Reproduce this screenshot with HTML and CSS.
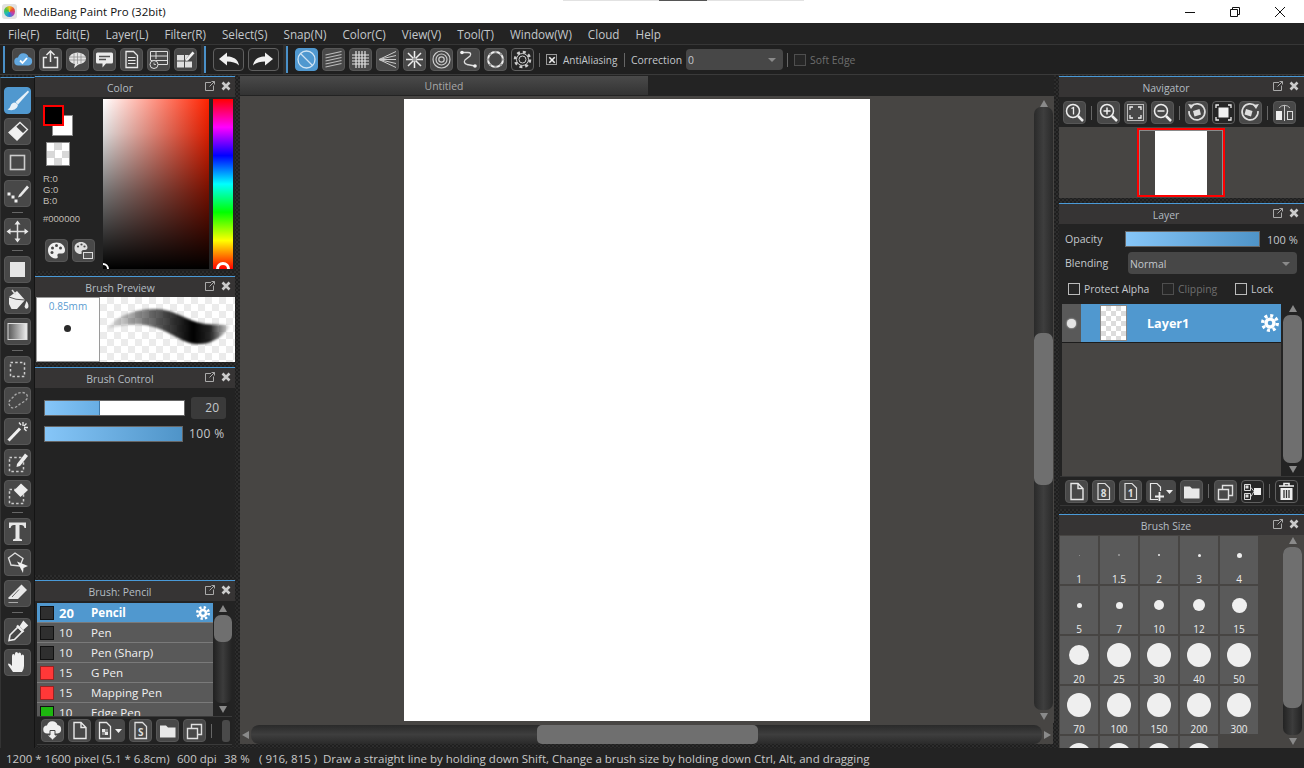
FILE: index.html
```html
<!DOCTYPE html>
<html lang="en">
<head>
    <meta charset="UTF-8">
    <meta name="viewport" content="width=device-width, initial-scale=1.0">
    <title>MediBang Paint Pro</title>
    <link rel="stylesheet" href="styles.css">
</head>
<body>

<svg class="defs" aria-hidden="true">
    <symbol id="i-popout" viewBox="0 0 10 10"><path d="M6 1.500H.5V9.500H8.500V4.500M4.500 5.500L9.500 .5M6.500 .5H9.500V3.500" fill="none" stroke="#aaa"/></symbol>
    <symbol id="i-close" viewBox="0 0 10 10"><path d="M1.500 1.500L8.500 8.500M8.500 1.500L1.500 8.500" fill="none" stroke="#ccc" stroke-width="2.600"/></symbol>
    <symbol id="i-gear" viewBox="0 0 16 16"><circle cx="8" cy="8" r="5" fill="#fff"/><circle cx="8" cy="8" r="6.500" fill="none" stroke="#fff" stroke-width="3" stroke-dasharray="2.600 2.500"/><circle cx="8" cy="8" r="2" fill="#5098cf"/></symbol>
    <symbol id="i-new" viewBox="0 0 23 23"><path d="M6 3.500H13L18 8.500V19.500H6ZM13 3.500V8.500H18" fill="none" stroke="#e8e8e8" stroke-width="1.400"/></symbol>
    <symbol id="i-folder" viewBox="0 0 23 23"><path d="M4 6.500H10L12 8.500H19.500V18.500H4Z" fill="#e8e8e8"/></symbol>
    <symbol id="i-copy" viewBox="0 0 23 23"><path d="M4.500 9.500H14.500V19.500H4.500ZM8.500 9.500V5.500H18.500V15.500H14.500" fill="none" stroke="#e0e0e0" stroke-width="1.400"/></symbol>
</svg>

<div class="app">

    <div class="titlebar">
        <span class="app-icon"><i></i></span>
        <span class="app-title">MediBang Paint Pro (32bit)</span>
        <div class="taskstrip"></div>
        <div class="winctl">
            <span class="winbtn"><svg width="12" height="12" viewBox="0 0 12 12"><path d="M1 6.500H11" stroke="#111"/></svg></span>
            <span class="winbtn"><svg width="12" height="12" viewBox="0 0 12 12"><path d="M1.500 3.500H8.500V10.500H1.500ZM3.500 3.500V1.500H10.500V8.500H8.500" fill="none" stroke="#111"/></svg></span>
            <span class="winbtn"><svg width="12" height="12" viewBox="0 0 12 12"><path d="M1 1L11 11M11 1L1 11" stroke="#111"/></svg></span>
        </div>
    </div>

    <div class="menubar">
        <span>File(F)</span>
        <span>Edit(E)</span>
        <span>Layer(L)</span>
        <span>Filter(R)</span>
        <span>Select(S)</span>
        <span>Snap(N)</span>
        <span>Color(C)</span>
        <span>View(V)</span>
        <span>Tool(T)</span>
        <span>Window(W)</span>
        <span>Cloud</span>
        <span>Help</span>
    </div>

    <div class="toolbar">
        <div class="tgroup g1">
            <i class="grip"></i>
            <div class="btnrow">
                <span class="btn"><svg viewBox="0 0 23 23"><path d="M6.500 17.500a4 4 0 0 1-.5-8a5.500 5.500 0 0 1 10.500-.5a4.300 4.300 0 0 1 0 8.500Z" fill="#62a8e0"/><path d="M8 12.500L10.500 15L15 10" fill="none" stroke="#fff" stroke-width="1.800"/></svg></span>
                <span class="btn"><svg viewBox="0 0 23 23"><path d="M11.500 14V3.500M7.500 7L11.500 3L15.500 7M8 9.500H4.500V19.500H18.500V9.500H15" fill="none" stroke="#e8e8e8" stroke-width="1.500"/></svg></span>
                <span class="btn"><svg viewBox="0 0 23 23"><ellipse cx="11.500" cy="10.500" rx="8.500" ry="6" fill="#e4e4e4"/><path d="M9 16L8 20L13 16Z" fill="#e4e4e4"/><path d="M3 9H20M3 12H20M8 5V16M11.500 5V16M15 5V16" stroke="#888" stroke-width=".7"/></svg></span>
                <span class="btn"><svg viewBox="0 0 23 23"><path d="M4.500 4.500H18.500Q20 4.500 20 6V14Q20 15.500 18.500 15.500H13L9.500 19.500V15.500H4.500Q3 15.500 3 14V6Q3 4.500 4.500 4.500Z" fill="#ececec"/><path d="M6 8.500H17M6 11.500H13" stroke="#555" stroke-width="1.300"/></svg></span>
                <span class="btn"><svg viewBox="0 0 23 23"><path d="M6 3.500H13.500L17.500 7.500V19.500H6Z" fill="none" stroke="#e8e8e8" stroke-width="1.300"/><path d="M8 9.500H15.500M8 12.500H15.500M8 15.500H15.500" stroke="#e8e8e8"/></svg></span>
                <span class="btn"><svg viewBox="0 0 23 23"><path d="M3.500 3.500H20.500V16.500H3.500M3.500 3.500V12M3.500 8H20.500M3.500 12.500H20.500M9 3.500V11" fill="none" stroke="#ddd"/><circle cx="7" cy="16.500" r="4" fill="#484848" stroke="#ddd"/><path d="M7 14.500V16.500H9" fill="none" stroke="#ddd" stroke-width=".8"/></svg></span>
                <span class="btn"><svg viewBox="0 0 23 23"><path d="M3 7H10V12.500H3ZM11 7H15L11 12.500ZM3 13.500H10V19.500H3ZM11 13.500H18V19.500H11Z" fill="#e0e0e0"/><path d="M12 11L18.500 3.500L20.500 5.300L14 12.500L11.500 13Z" fill="#f2f2f2"/></svg></span>
            </div>
        </div>
        <div class="tgroup g2">
            <i class="grip"></i>
            <div class="btnrow">
                <span class="btn btn-wide btn-dark"><svg viewBox="0 0 31 23"><path d="M6 11L14 4.500V8.500C20 8.500 25 11 26 17.500C23 14.500 19 13.500 14 13.500V17.500Z" fill="#f0f0f0"/></svg></span>
                <span class="btn btn-wide btn-dark"><svg viewBox="0 0 31 23"><path d="M25 11L17 4.500V8.500C11 8.500 6 11 5 17.500C8 14.500 12 13.500 17 13.500V17.500Z" fill="#f0f0f0"/></svg></span>
            </div>
        </div>
        <div class="tgroup g3">
            <i class="grip"></i>
            <div class="btnrow">
                <span class="btn btn-on"><svg viewBox="0 0 23 23"><circle cx="11.500" cy="11.500" r="8.500" fill="none" stroke="#cfe3f3" stroke-width="1.300"/><path d="M5.500 5.500L17.500 17.500" stroke="#cfe3f3" stroke-width="1.300"/></svg></span>
                <span class="btn"><svg viewBox="0 0 23 23"><path d="M3.500 7L19.500 3.500M3.500 10L19.500 6.500M3.500 13L19.500 9.500M3.500 16L19.500 12.500M3.500 19L19.500 15.500" stroke="#bbb" stroke-width="1.200"/></svg></span>
                <span class="btn"><svg viewBox="0 0 23 23"><path d="M3 7H20M3 10H20M3 13H20M3 16H20M7 3V20M10 3V20M13 3V20M16 3V20" stroke="#e4e4e4" stroke-width="1.200"/></svg></span>
                <span class="btn"><svg viewBox="0 0 23 23"><path d="M3 11.500L20 3.500M3 11.500L20 7.500M3 11.500H20M3 11.500L20 15.500M3 11.500L20 19.500" stroke="#ccc"/></svg></span>
                <span class="btn"><svg viewBox="0 0 23 23"><path d="M11.500 3V20M3 11.500H20M5 5L18 18M18 5L5 18" stroke="#eee" stroke-width="1.500"/><circle cx="11.500" cy="11.500" r="2" fill="#999"/></svg></span>
                <span class="btn"><svg viewBox="0 0 23 23"><g fill="none" stroke="#ccc" stroke-width="1.200"><circle cx="11.500" cy="11.500" r="8.500"/><circle cx="11.500" cy="11.500" r="5.500"/><circle cx="11.500" cy="11.500" r="2.700"/></g></svg></span>
                <span class="btn"><svg viewBox="0 0 23 23"><path d="M5 4.500H11Q15 4.500 13 8L8 12Q6 15 10 16.500L18 18" fill="none" stroke="#ddd" stroke-width="1.300"/><circle cx="5" cy="4.500" r="1.800" fill="#f2f2f2"/><circle cx="18" cy="18" r="1.800" fill="#f2f2f2"/></svg></span>
                <span class="btn"><svg viewBox="0 0 23 23"><circle cx="11.500" cy="11.500" r="7.500" fill="none" stroke="#f0f0f0" stroke-width="2"/><g fill="#9a9a9a"><circle cx="11.500" cy="4" r="1.300"/><circle cx="11.500" cy="19" r="1.300"/><circle cx="4" cy="11.500" r="1.300"/><circle cx="19" cy="11.500" r="1.300"/><circle cx="6.200" cy="6.200" r="1.300"/><circle cx="16.800" cy="6.200" r="1.300"/><circle cx="6.200" cy="16.800" r="1.300"/><circle cx="16.800" cy="16.800" r="1.300"/></g></svg></span>
                <span class="btn btn-dark"><svg viewBox="0 0 23 23"><g fill="none" stroke="#ccc"><circle cx="11.500" cy="11.500" r="3.500"/><circle cx="11.500" cy="11.500" r="6"/><circle cx="11.500" cy="11.500" r="7.500" stroke-width="2.500" stroke-dasharray="3 2.900"/></g></svg></span>
            </div>
            <i class="vsep sep-a"></i>
            <span class="check check-x"><svg viewBox="0 0 11 11"><path d="M2.500 2.500L8.500 8.500M8.500 2.500L2.500 8.500" stroke="#eee" stroke-width="1.800"/></svg></span>
            <span class="tlabel aa-label">AntiAliasing</span>
            <i class="vsep sep-b"></i>
            <span class="tlabel corr-label">Correction</span>
            <div class="select corr-select"><span>0</span><i class="caret"></i></div>
            <i class="vsep sep-c"></i>
            <span class="check check-dim"></span>
            <span class="tlabel dim soft-label">Soft Edge</span>
        </div>
    </div>

    <div class="main">

        <div class="tools">
            <span class="tool tool-on"><svg viewBox="0 0 27 27"><path d="M24 3.500L11.500 15L14 17.500L25 5Z" fill="#e8f1f8"/><path d="M11 15.500Q7.500 15.500 6.500 19Q6 21.500 3.500 22.500Q10 24.500 13 20.500Q14.500 18 13.500 17Z" fill="#e8f1f8"/></svg></span>
            <span class="tool"><svg viewBox="0 0 27 27"><path d="M16 4.500L23.500 11.500L13 22L5 14.500Z" fill="none" stroke="#eee" stroke-width="1.300"/><path d="M12 8.500L19.500 15.500L13 22L5 14.500Z" fill="#f0f0f0"/></svg></span>
            <span class="tool"><svg viewBox="0 0 27 27"><rect x="6.500" y="6.500" width="14" height="14" fill="none" stroke="#ccc" stroke-width="1.600"/></svg></span>
            <span class="tool"><svg viewBox="0 0 27 27"><path d="M15 15L23 5.500L25 7.500L17 16.500L14 17.500Z" fill="#e8e8e8"/><path d="M3.500 12.500h3v3h-3zM7.500 15.500h3v3h-3zM10.500 19.500h3v3h-3z" fill="#f0f0f0"/></svg></span>
            <i class="tsep"></i>
            <span class="tool"><svg viewBox="0 0 27 27"><path d="M13.500 4V23M4 13.500H23" stroke="#e0e0e0" stroke-width="1.500"/><path d="M13.500 2.500L16.500 6.500H10.500ZM13.500 24.500L16.500 20.500H10.500ZM2.500 13.500L6.500 10.500V16.500ZM24.500 13.500L20.500 10.500V16.500Z" fill="#e8e8e8"/></svg></span>
            <i class="tsep"></i>
            <span class="tool"><svg viewBox="0 0 27 27"><rect x="6" y="6" width="15" height="15" fill="#e6e6e6"/></svg></span>
            <span class="tool"><svg viewBox="0 0 27 27"><path d="M5 10L13 4L21 13L13 22H7.500L5 17Z" fill="#ececec"/><path d="M5 10Q11 13 21 13" fill="none" stroke="#555"/><path d="M22.500 14Q25.500 18 24 21Q21.500 23 20.500 19.500Z" fill="#ececec"/><path d="M8 3L12 8" stroke="#ddd" stroke-width="1.500"/></svg></span>
            <span class="tool"><svg viewBox="0 0 27 27"><defs><linearGradient id="grad-tool"><stop offset="0" stop-color="#555"/><stop offset="1" stop-color="#f0f0f0"/></linearGradient></defs><rect x="4" y="5.500" width="19" height="16" fill="url(#grad-tool)" stroke="#ddd"/></svg></span>
            <i class="tsep"></i>
            <span class="tool"><svg viewBox="0 0 27 27"><rect x="6.500" y="6.500" width="14" height="14" fill="none" stroke="#ccc" stroke-width="1.500" stroke-dasharray="2.500 2.200"/></svg></span>
            <span class="tool"><svg viewBox="0 0 27 27"><path d="M6 19C2.500 14 8 12 10 9C13 5 21 4 23 8C25 13 19 15 16 17C12 20 9 23 6 19Z" fill="none" stroke="#aaa" stroke-width="1.300" stroke-dasharray="2.500 1.800"/></svg></span>
            <span class="tool"><svg viewBox="0 0 27 27"><path d="M4.500 22.500L16 10.500" stroke="#f0f0f0" stroke-width="3"/><path d="M19 4V8M22.500 5.500L20 8M24 9.500H20M15 4.500L17 7M22.500 13L20 10.500" stroke="#e8e8e8" stroke-width="1.300"/></svg></span>
            <span class="tool"><svg viewBox="0 0 27 27"><rect x="5.500" y="8.500" width="14" height="14" fill="none" stroke="#ccc" stroke-width="1.500" stroke-dasharray="2.500 2.200"/><path d="M13 15L21 4.500L24 7L16 17L12.500 18Z" fill="#ededed"/></svg></span>
            <span class="tool"><svg viewBox="0 0 27 27"><rect x="5.500" y="9.500" width="14" height="14" fill="none" stroke="#ccc" stroke-width="1.500" stroke-dasharray="2.500 2.200"/><path d="M17 3.500L24 10L16.500 17L10 10.500Z" fill="#ededed"/></svg></span>
            <i class="tsep"></i>
            <span class="tool"><svg viewBox="0 0 27 27"><path d="M5 4.500H22V10H20.500Q20 7 17 7H15.500V20.500L18 21.500V23H9V21.500L11.500 20.500V7H10Q7 7 6.500 10H5Z" fill="#e6e6e6"/></svg></span>
            <span class="tool"><svg viewBox="0 0 27 27"><path d="M11 4L19 9.500L16 17L7 16L4.500 9Z" fill="none" stroke="#ddd" stroke-width="1.400"/><path d="M13 12.500L24 17L19.500 19L19 24Z" fill="#f0f0f0"/></svg></span>
            <span class="tool"><svg viewBox="0 0 27 27"><path d="M17.500 4.500L23 10L14 19H4.500V17.500Z" fill="#e8e8e8"/><path d="M4.500 22.500H14" stroke="#aaa"/><path d="M8 17L15 9.500" stroke="#666"/></svg></span>
            <i class="tsep"></i>
            <span class="tool"><svg viewBox="0 0 27 27"><path d="M6 17L14 9L18.500 13.500L10.500 21.500L5 22.500Z" fill="none" stroke="#eee" stroke-width="1.600"/><path d="M13 7.500L19.500 14M16.500 9L19.500 4.500L22.500 7.500L18.500 11" stroke="#eee" stroke-width="2.400" fill="#eee"/></svg></span>
            <span class="tool"><svg viewBox="0 0 27 27"><path d="M9 23Q7 20 4.500 16.500Q3 13.500 6 15L8 17V7Q8 5 9.500 5T11 7V11.500V4.500Q11 3 12.500 3T14 4.500V11.500V5Q14 3.500 15.500 3.500T17 5V12V7Q17 5.500 18.500 5.500T20 7V17Q20 20 18 23Z" fill="#f0f0f0"/></svg></span>
        </div>

        <div class="dock dock-left">

            <div class="panel panel-color">
                <div class="phead"><span class="ptitle">Color</span><span class="pbtns"><svg><use href="#i-popout"></use></svg><svg><use href="#i-close"></use></svg></span></div>
                <div class="pbody color-body">
                    <div class="color-side">
                        <div class="swatches"><i class="sw-bg"></i><i class="sw-fg"></i></div>
                        <div class="sw-clear"></div>
                        <div class="rgb">R:0<br>G:0<br>B:0</div>
                        <div class="hex">#000000</div>
                        <div class="color-btns">
                            <span class="btn"><svg viewBox="0 0 23 23"><path d="M11.500 3.500C6.500 3.500 3 7 3 11.500S6.500 19.500 11 19.500C13 19.500 13 18 12.500 17C12 15.500 13 14.500 14.500 14.500H17C19 14.500 20 13 20 11C20 7 16.500 3.500 11.500 3.500Z" fill="#efefef"/><g fill="#484848"><circle cx="7.500" cy="9" r="1.500"/><circle cx="11.500" cy="6.500" r="1.500"/><circle cx="15.500" cy="9" r="1.500"/><circle cx="7" cy="13.500" r="1.500"/></g></svg></span>
                            <span class="btn"><svg viewBox="0 0 23 23"><path d="M9 3C5 3 2.500 5.500 2.500 9S5 15 8.500 15C10 15 10 14 9.500 13C9.500 12 10 11 11.500 11H13C14.500 11 15.500 10 15.500 8.500C15.500 5.500 13 3 9 3Z" fill="#ddd"/><g fill="#484848"><circle cx="6" cy="7.500" r="1.100"/><circle cx="9.500" cy="5.500" r="1.100"/><circle cx="12.500" cy="7.500" r="1.100"/></g><rect x="11.500" y="13.500" width="9" height="6" fill="#555" stroke="#ddd"/></svg></span>
                        </div>
                    </div>
                    <div class="sv"><i class="sv-ring"></i></div>
                    <div class="hue"><i class="hue-ring"></i></div>
                </div>
            </div>

            <div class="panel">
                <div class="phead"><span class="ptitle">Brush Preview</span><span class="pbtns"><svg><use href="#i-popout"></use></svg><svg><use href="#i-close"></use></svg></span></div>
                <div class="preview-body">
                    <div class="tip">
                        <span class="tip-size">0.85mm</span>
                        <i class="tip-dot"></i>
                    </div>
                    <div class="stroke">
                        <svg viewBox="0 0 135 65">
                            <defs>
                                <linearGradient id="stroke-fill">
                                    <stop offset="0" stop-color="#000" stop-opacity=".06"/>
                                    <stop offset=".3" stop-color="#000" stop-opacity=".5"/>
                                    <stop offset=".7" stop-color="#000"/>
                                    <stop offset=".84" stop-color="#000" stop-opacity=".85"/>
                                    <stop offset="1" stop-color="#000" stop-opacity=".05"/>
                                </linearGradient>
                                <filter id="stroke-blur"><feGaussianBlur stdDeviation="1"/></filter>
                            </defs>
                            <path d="M7 32C18 17 38 12 55 12C75 12 86 24 105 27C115 28 125 27 130 29C125 38 112 48 97 47C80 46 72 34 50 29C35 26 20 28 7 32Z" fill="url(#stroke-fill)" filter="url(#stroke-blur)"/>
                        </svg>
                    </div>
                </div>
            </div>

            <div class="panel panel-control">
                <div class="phead"><span class="ptitle">Brush Control</span><span class="pbtns"><svg><use href="#i-popout"></use></svg><svg><use href="#i-close"></use></svg></span></div>
                <div class="pbody control-body">
                    <div class="ctl-row ctl-size">
                        <div class="slider slider-size"><i class="fill fill-size"></i></div>
                        <span class="numbox">20</span>
                    </div>
                    <div class="ctl-row ctl-opacity">
                        <div class="slider slider-op"><i class="fill fill-full"></i></div>
                        <span class="pct pct-big">100 %</span>
                    </div>
                </div>
            </div>

            <div class="panel panel-brush">
                <div class="phead"><span class="ptitle">Brush: Pencil</span><span class="pbtns"><svg><use href="#i-popout"></use></svg><svg><use href="#i-close"></use></svg></span></div>
                <div class="pbody brush-body">
                    <div class="brush-top">
                        <div class="brush-list">
                            <div class="brow brow-on"><i class="bsw"></i><b class="bnum">20</b><b class="bname">Pencil</b><svg class="bgear"><use href="#i-gear"></use></svg></div>
                            <div class="brow"><i class="bsw"></i><span class="bnum">10</span><span class="bname">Pen</span></div>
                            <div class="brow"><i class="bsw"></i><span class="bnum">10</span><span class="bname">Pen (Sharp)</span></div>
                            <div class="brow"><i class="bsw bsw-red"></i><span class="bnum">15</span><span class="bname">G Pen</span></div>
                            <div class="brow"><i class="bsw bsw-red"></i><span class="bnum">15</span><span class="bname">Mapping Pen</span></div>
                            <div class="brow"><i class="bsw bsw-green"></i><span class="bnum">10</span><span class="bname">Edge Pen</span></div>
                        </div>
                        <div class="vscroll vs-brush"><i class="arr arr-up"></i><div class="vtrack"><i class="vthumb"></i></div><i class="arr arr-down"></i></div>
                    </div>
                    <div class="brush-bar">
                        <span class="btn"><svg viewBox="0 0 23 23"><path d="M6.500 14.500a4 4 0 0 1-.5-8a5.500 5.500 0 0 1 10.500-.5a4.300 4.300 0 0 1 0 8.500Z" fill="#eee"/><path d="M9 11.500H14V16H17L11.500 21L6 16H9Z" fill="#eee" stroke="#484848"/></svg></span>
                        <span class="btn"><svg><use href="#i-new"></use></svg></span>
                        <span class="btn btn-drop"><svg viewBox="0 0 30 23"><path d="M4.500 3.500H11.500L15.500 7.500V19.500H4.500Z" fill="none" stroke="#e8e8e8" stroke-width="1.300"/><path d="M7 10h3v3h-3zM10 13h3v3h-3z" fill="#e8e8e8"/><path d="M7 13h3v3h-3zM10 10h3v3h-3z" fill="#888"/><path d="M20 10H27L23.500 14Z" fill="#eee"/></svg></span>
                        <span class="btn"><svg viewBox="0 0 23 23"><path d="M6 3.500H13.500L17.500 7.500V19.500H6Z" fill="none" stroke="#ddd" stroke-width="1.300"/><text x="11.700" y="16.500" class="mini-s">S</text></svg></span>
                        <span class="btn"><svg><use href="#i-folder"></use></svg></span>
                        <span class="btn"><svg><use href="#i-copy"></use></svg></span>
                        <i class="vsep sep-bb"></i>
                        <i class="mini-scroll"></i>
                    </div>
                </div>
            </div>
        </div>

        <div class="center">
            <div class="tabs"><div class="tab">Untitled</div></div>
            <div class="canvas">
                <div class="viewport"><div class="page"></div></div>
                <div class="vscroll vs-canvas"><i class="arr arr-up"></i><div class="vtrack"><i class="vthumb"></i></div><i class="arr arr-down"></i></div>
            </div>
            <div class="hscroll"><i class="arr arr-left"></i><div class="htrack"><i class="hthumb"></i></div><i class="arr arr-right"></i></div>
        </div>

        <div class="dock dock-right">

            <div class="panel">
                <div class="phead"><span class="ptitle">Navigator</span><span class="pbtns"><svg><use href="#i-popout"></use></svg><svg><use href="#i-close"></use></svg></span></div>
                <div class="nav-bar">
                    <span class="btn"><svg viewBox="0 0 23 23"><circle cx="10" cy="10" r="6.500" fill="none" stroke="#eee" stroke-width="1.500"/><path d="M15 15L20 20" stroke="#eee" stroke-width="2.500"/><path d="M8.500 7.500L10.500 6.500V13.500" fill="none" stroke="#eee" stroke-width="1.300"/></svg></span>
                    <i class="vsep"></i>
                    <span class="btn"><svg viewBox="0 0 23 23"><circle cx="10" cy="10" r="6.500" fill="none" stroke="#eee" stroke-width="1.500"/><path d="M15 15L20 20" stroke="#eee" stroke-width="2.500"/><path d="M6.500 10H13.500M10 6.500V13.500" stroke="#eee" stroke-width="1.500"/></svg></span>
                    <span class="btn"><svg viewBox="0 0 23 23"><rect x="3.500" y="3.500" width="16" height="16" fill="none" stroke="#bbb"/><path d="M6 9V6H9M14 6H17V9M17 14V17H14M9 17H6V14" fill="none" stroke="#eee" stroke-width="1.300"/></svg></span>
                    <span class="btn"><svg viewBox="0 0 23 23"><circle cx="10" cy="10" r="6.500" fill="none" stroke="#eee" stroke-width="1.500"/><path d="M15 15L20 20" stroke="#eee" stroke-width="2.500"/><path d="M6.500 10H13.500" stroke="#eee" stroke-width="1.500"/></svg></span>
                    <i class="vsep"></i>
                    <span class="btn"><svg viewBox="0 0 23 23"><path d="M6 5.500A8 8 0 1 1 4 10" fill="none" stroke="#ddd" stroke-width="1.600"/><path d="M3 3L9 4L6 8Z" fill="#ddd"/><path d="M8 10L14.500 8L16 13.500L9.500 15.500Z" fill="#ddd"/></svg></span>
                    <span class="btn btn-dark"><svg viewBox="0 0 23 23"><rect x="6.500" y="6.500" width="10" height="10" fill="#f0f0f0"/><path d="M4 7V4H7M16 4H19V7M19 16V19H16M7 19H4V16" fill="none" stroke="#eee" stroke-width="1.300"/></svg></span>
                    <span class="btn"><svg viewBox="0 0 23 23"><path d="M17 5.500A8 8 0 1 0 19 10" fill="none" stroke="#ddd" stroke-width="1.600"/><path d="M20 3L14 4L17 8Z" fill="#ddd"/><path d="M7 8L13.500 10L12 15.500L5.500 13.500Z" fill="#ddd"/></svg></span>
                    <i class="vsep"></i>
                    <span class="btn"><svg viewBox="0 0 23 23"><path d="M11.500 4V20" stroke="#ccc"/><rect x="3" y="10" width="6" height="9" fill="#eee"/><rect x="14.500" y="10.500" width="5" height="8" fill="none" stroke="#ddd"/><path d="M6 7A7 7 0 0 1 17 7" fill="none" stroke="#bbb"/></svg></span>
                </div>
                <div class="nav-view"><div class="nav-frame"><div class="nav-inner"><div class="nav-page"></div></div></div></div>
            </div>

            <div class="panel panel-layer">
                <div class="phead"><span class="ptitle">Layer</span><span class="pbtns"><svg><use href="#i-popout"></use></svg><svg><use href="#i-close"></use></svg></span></div>
                <div class="pbody layer-body">
                    <div class="lrow lrow-op">
                        <span class="llabel">Opacity</span>
                        <div class="slider slider-layer"><i class="fill fill-full"></i></div>
                        <span class="pct">100 %</span>
                    </div>
                    <div class="lrow lrow-blend">
                        <span class="llabel">Blending</span>
                        <div class="select blend-select"><span>Normal</span><i class="caret"></i></div>
                    </div>
                    <div class="lrow lrow-checks">
                        <span class="check"></span><span class="ck-label w-alpha">Protect Alpha</span>
                        <span class="check check-dim"></span><span class="ck-label dim w-clip">Clipping</span>
                        <span class="check"></span><span class="ck-label">Lock</span>
                    </div>
                    <div class="layer-mid">
                        <div class="layer-list">
                            <div class="layer-row">
                                <div class="eye"><i></i></div>
                                <div class="layer-info">
                                    <div class="layer-thumb"></div>
                                    <b class="layer-name">Layer1</b>
                                    <svg class="layer-gear"><use href="#i-gear"></use></svg>
                                </div>
                            </div>
                        </div>
                        <div class="vscroll vs-layer"><i class="arr arr-up"></i><div class="vtrack"><i class="vthumb"></i></div><i class="arr arr-down"></i></div>
                    </div>
                    <div class="layer-bar">
                        <span class="btn"><svg><use href="#i-new"></use></svg></span>
                        <span class="btn"><svg viewBox="0 0 23 23"><path d="M6 3.500H13L17.500 8V19.500H6Z" fill="none" stroke="#ddd" stroke-width="1.200"/><text x="11.700" y="16.500" class="mini-s">8</text></svg></span>
                        <span class="btn"><svg viewBox="0 0 23 23"><path d="M6 3.500H13L17.500 8V19.500H6Z" fill="none" stroke="#ddd" stroke-width="1.200"/><text x="11.700" y="16.500" class="mini-s">1</text></svg></span>
                        <span class="btn btn-drop"><svg viewBox="0 0 30 23"><path d="M12 19.500H4.500V3.500H11L14.500 7V11" fill="none" stroke="#e8e8e8" stroke-width="1.200"/><path d="M9 16.500H18M13.500 12V21" stroke="#eee" stroke-width="1.800"/><path d="M20 10H27L23.500 14Z" fill="#eee"/></svg></span>
                        <span class="btn"><svg><use href="#i-folder"></use></svg></span>
                        <i class="vsep"></i>
                        <span class="btn"><svg><use href="#i-copy"></use></svg></span>
                        <span class="btn btn-dark"><svg viewBox="0 0 23 23"><path d="M3.500 4.500h6v6h-6zM3.500 13.500h6v6h-6z" fill="none" stroke="#ddd"/><path d="M4.500 5.500h3v3h-3zM4.500 14.500h3v3h-3z" fill="#ddd"/><path d="M10 7.500L13 11.500L10 16.500" fill="none" stroke="#ccc"/><rect x="13" y="8" width="7" height="7" fill="#f0f0f0"/></svg></span>
                        <i class="vsep"></i>
                        <span class="btn btn-dark"><svg viewBox="0 0 23 23"><path d="M4 6H19M9 6V3.500H14V6" fill="none" stroke="#eee" stroke-width="1.600"/><path d="M5.500 8H17.500V20H5.500Z" fill="#eee"/><path d="M9 10V18M11.500 10V18M14 10V18" stroke="#333" stroke-width="1.300"/></svg></span>
                    </div>
                </div>
            </div>

            <div class="panel panel-size">
                <div class="phead"><span class="ptitle">Brush Size</span><span class="pbtns"><svg><use href="#i-popout"></use></svg><svg><use href="#i-close"></use></svg></span></div>
                <div class="pbody size-body">
                    <div class="size-grid">
                        <div class="cell"><div class="spot"><i class="s1 faint"></i></div>1</div>
                        <div class="cell"><div class="spot"><i class="s2 faint"></i></div>1.5</div>
                        <div class="cell"><div class="spot"><i class="s2"></i></div>2</div>
                        <div class="cell"><div class="spot"><i class="s3"></i></div>3</div>
                        <div class="cell"><div class="spot"><i class="s4"></i></div>4</div>
                        <div class="cell"><div class="spot"><i class="s5"></i></div>5</div>
                        <div class="cell"><div class="spot"><i class="s7"></i></div>7</div>
                        <div class="cell"><div class="spot"><i class="s10"></i></div>10</div>
                        <div class="cell"><div class="spot"><i class="s12"></i></div>12</div>
                        <div class="cell"><div class="spot"><i class="s15"></i></div>15</div>
                        <div class="cell"><div class="spot"><i class="s20"></i></div>20</div>
                        <div class="cell"><div class="spot"><i class="s24"></i></div>25</div>
                        <div class="cell"><div class="spot"><i class="s24"></i></div>30</div>
                        <div class="cell"><div class="spot"><i class="s24"></i></div>40</div>
                        <div class="cell"><div class="spot"><i class="s24"></i></div>50</div>
                        <div class="cell"><div class="spot"><i class="s24"></i></div>70</div>
                        <div class="cell"><div class="spot"><i class="s24"></i></div>100</div>
                        <div class="cell"><div class="spot"><i class="s24"></i></div>150</div>
                        <div class="cell"><div class="spot"><i class="s24"></i></div>200</div>
                        <div class="cell"><div class="spot"><i class="s24"></i></div>300</div>
                        <div class="cell"><div class="spot"><i class="s24"></i></div></div>
                        <div class="cell"><div class="spot"><i class="s24"></i></div></div>
                        <div class="cell"><div class="spot"><i class="s24"></i></div></div>
                        <div class="cell"><div class="spot"><i class="s24"></i></div></div>
                    </div>
                    <div class="vscroll vs-size"><i class="arr arr-up"></i><div class="vtrack"><i class="vthumb"></i></div><i class="arr arr-down"></i></div>
                </div>
            </div>
        </div>
    </div>

    <div class="statusbar">
        <span class="st1">1200 * 1600 pixel</span>
        <span class="st2">(5.1 * 6.8cm)</span>
        <span class="st3">600 dpi</span>
        <span class="st4">38 %</span>
        <span class="st5">( 916, 815 )</span>
        <span>Draw a straight line by holding down Shift, Change a brush size by holding down Ctrl, Alt, and dragging</span>
    </div>
</div>

</body>
</html>
```

FILE: styles.css
```css
* {
    box-sizing: border-box;
}
html, body {
    margin: 0;
    height: 100%;
    overflow: hidden;
}
body {
    font-family: "Open Sans", "Liberation Sans", sans-serif;
    font-size: 10.4px;
    color: #c4c8cc;
    background-color: #232323;
}
i {
    display: block;
    font-style: normal;
}
.defs {
    display: none;
}
.app {
    width: 1304px;
    height: 768px;
    display: flex;
    flex-direction: column;
}

/* title bar */
.titlebar {
    position: relative;
    height: 23px;
    flex: none;
    background: #fff;
    display: flex;
    align-items: center;
    color: #111;
    font-size: 11.5px;
}
.app-icon {
    width: 15px;
    height: 15px;
    margin-left: 2px;
    padding: 2px;
    border-radius: 3px;
    background: #e2e2e2;
}
.app-icon i {
    width: 11px;
    height: 11px;
    border-radius: 50%;
    background: conic-gradient(#f4c020, #e84a30, #c040b0, #3080e0, #20c0b0, #50c040, #f4c020);
}
.app-title {
    margin-left: 6px;
}
.taskstrip {
    position: absolute;
    top: 0;
    left: 563px;
    width: 241px;
    height: 1px;
    background: linear-gradient(to right, #e2e2e2 0 96px, #555 96px 144px, #e2e2e2 144px);
}
.winctl {
    margin-left: auto;
    margin-right: 2px;
    display: flex;
}
.winbtn {
    width: 45px;
    height: 23px;
    display: flex;
    align-items: center;
    justify-content: center;
}

/* menu */
.menubar {
    height: 22px;
    flex: none;
    display: flex;
    align-items: center;
    gap: 16px;
    padding-left: 8px;
    font-size: 11.7px;
    background: #232323;
    border-bottom: 1px solid #363636;
}

/* top toolbar */
.toolbar {
    height: 30px;
    flex: none;
    display: flex;
    background: #2e2e2e;
    border-bottom: 1px solid #3a3a3a;
}
.tgroup {
    display: flex;
    align-items: center;
    background: #202020;
}
.g1 {
    width: 201px;
    padding-left: 3px;
}
.g2 {
    width: 79px;
    margin-left: 3px;
}
.g3 {
    flex: 1;
    margin-left: 3px;
}
.grip {
    width: 2px;
    height: 27px;
    margin-right: 7px;
    background: #4a90c8;
    flex: none;
}
.btnrow {
    display: flex;
    gap: 4px;
}
.btn {
    width: 23px;
    height: 23px;
    flex: none;
    display: block;
    background: #484848;
    border: 1px solid #575757;
    border-radius: 4px;
}
.btn svg {
    display: block;
    width: 23px;
    height: 23px;
    margin: -1px;
}
.btn-wide {
    width: 31px;
}
.btn-wide svg {
    width: 31px;
}
.btn-drop {
    width: 30px;
    border-color: #484848;
}
.btn-drop svg {
    width: 30px;
}
.btn-dark {
    background: #262626;
    border-color: #5f5f5f;
}
.btn-on {
    background: #5098cf;
    border-color: #5098cf;
}
.vsep {
    width: 1px;
    height: 14px;
    background: #666;
    flex: none;
}
.sep-a {
    margin: 0 6px 0 5px;
}
.sep-b {
    margin: 0 6px 0 7px;
}
.sep-c {
    margin: 0 6px 0 4px;
}
.tlabel {
    white-space: nowrap;
}
.aa-label {
    margin-left: 6px;
    width: 54px;
    font-size: 10px;
}
.corr-label {
    width: 50px;
}
.soft-label {
    margin-left: 4px;
}
.dim {
    color: #6e6e6e;
}
.check {
    width: 12px;
    height: 12px;
    flex: none;
    display: block;
    border: 1px solid #bbb;
    background: #262626;
}
.check svg {
    display: block;
    width: 10px;
    height: 10px;
}
.check-x {
    width: 11px;
    height: 11px;
    border-color: #999;
}
.check-dim {
    border-color: #4e4e4e;
}
.select {
    display: flex;
    align-items: center;
    justify-content: space-between;
    background: #474747;
    border-radius: 4px;
    padding: 1px 7px 0 2px;
}
.corr-select {
    width: 97px;
    height: 21px;
    margin-left: 5px;
}
.caret {
    width: 0;
    height: 0;
    border-left: 4px solid transparent;
    border-right: 4px solid transparent;
    border-top: 4px solid #8a8a8a;
}

/* main area */
.main {
    height: 673px;
    flex: none;
    display: flex;
    background-color: #222;
    background-image: repeating-conic-gradient(#2c2c2c 0 25%, #1f1f1f 0 50%);
    background-size: 4px 4px;
}
.tools {
    width: 35px;
    flex: none;
    margin-top: 2px;
    padding: 9px 0 0 3px;
    display: flex;
    flex-direction: column;
    background: #232323;
    border-top: 1px solid #4a90c8;
    border-left: 1px solid #333;
    border-right: 1px solid #141414;
}
.tool {
    width: 27px;
    height: 27px;
    flex: none;
    margin-bottom: 4px;
    background: #484848;
    border: 1px solid #575757;
    border-radius: 4px;
}
.tool svg {
    display: block;
    width: 27px;
    height: 27px;
    margin: -1px;
}
.tool-on {
    background: #5098cf;
    border-color: #5098cf;
}
.tsep {
    width: 11px;
    height: 1px;
    margin: 1px 0 5px 8px;
    background: #666;
}

/* docks and panels */
.dock {
    flex: none;
    margin-top: 1px;
    display: flex;
    flex-direction: column;
    gap: 5px;
}
.dock-left {
    width: 200px;
}
.dock-right {
    width: 245px;
}
.panel {
    border-top: 1px solid #4a9ad8;
    flex: none;
    background: #232323;
}
.phead {
    height: 20px;
    display: flex;
    align-items: center;
    background: #363434;
}
.ptitle {
    flex: 1;
    padding-top: 2px;
    text-align: center;
    color: #b4bcc2;
}
.pbtns {
    width: 30px;
    display: flex;
    gap: 6px;
    margin-bottom: 2px;
}
.dock-right .pbtns {
    width: 31px;
}
.pbtns svg {
    width: 10px;
    height: 10px;
}

/* color */
.panel-color {
    height: 195px;
}
.color-body {
    display: flex;
    height: 174px;
    padding-top: 2px;
}
.color-side {
    width: 68px;
    flex: none;
    padding: 6px 0 0 8px;
}
.swatches {
    position: relative;
    width: 30px;
    height: 30px;
}
.sw-fg,
.sw-bg {
    position: absolute;
    width: 21px;
    height: 21px;
}
.sw-fg {
    top: 0;
    left: 0;
    background: #000;
    border: 2px solid #f00;
}
.sw-bg {
    top: 10px;
    left: 9px;
    background: #fff;
    border: 1px solid #888;
}
.sw-clear {
    width: 24px;
    height: 24px;
    margin: 7px 0 0 3px;
    border: 1px solid #888;
    background: repeating-conic-gradient(#d8d8d8 0 25%, #fff 0 50%) 0 0 / 15px 15px;
}
.rgb,
.hex {
    font-family: "Liberation Sans", sans-serif;
    font-size: 9.5px;
    line-height: 11px;
    color: #c0bcb4;
}
.rgb {
    margin-top: 7px;
}
.hex {
    margin-top: 7px;
}
.color-btns {
    display: flex;
    gap: 4px;
    margin: 15px 0 0 2px;
}
.sv {
    position: relative;
    width: 106px;
    height: 170px;
    overflow: hidden;
    background: linear-gradient(to top, #000, rgba(0, 0, 0, .55) 45%, rgba(0, 0, 0, .15) 80%, transparent), linear-gradient(to right, #fff, #f20);
}
.sv-ring {
    position: absolute;
    left: -6px;
    bottom: -6px;
    width: 12px;
    height: 12px;
    border: 2px solid #fff;
    border-radius: 50%;
}
.hue {
    position: relative;
    width: 20px;
    height: 170px;
    margin-left: 4px;
    overflow: hidden;
    background: linear-gradient(to bottom, #f00, #f0f 16.6%, #00f 33.3%, #0ff 50%, #0f0 66.6%, #ff0 83.3%, #f00);
}
.hue-ring {
    position: absolute;
    left: 3px;
    bottom: -7px;
    width: 14px;
    height: 14px;
    border: 3px solid #fff;
    border-radius: 50%;
}

/* brush preview */
.preview-body {
    height: 65px;
    display: flex;
    margin-left: 1px;
    background: #fff;
}
.tip {
    width: 64px;
    flex: none;
    position: relative;
    padding-top: 1px;
    text-align: center;
    font-size: 10px;
    color: #5a9bd0;
    border: 1px solid #9a9a9a;
}
.tip-dot {
    position: absolute;
    left: 27px;
    top: 27px;
    width: 7px;
    height: 7px;
    border-radius: 50%;
    background: #2a2a2a;
}
.stroke {
    flex: 1;
    background: repeating-conic-gradient(#ebebeb 0 25%, #fff 0 50%) 0 0 / 14px 14px;
}
.stroke svg {
    display: block;
    width: 135px;
    height: 65px;
}

/* brush control */
.panel-control {
    height: 208px;
}
.control-body {
    padding: 9px 0 0 9px;
}
.ctl-row {
    display: flex;
    align-items: center;
}
.ctl-opacity {
    margin-top: 6px;
}
.slider {
    height: 16px;
    background: #fff;
    border: 1px solid #666;
}
.slider-size {
    width: 141px;
}
.slider-op {
    width: 139px;
}
.slider-layer {
    width: 135px;
}
.fill {
    height: 100%;
    background: linear-gradient(to right, #86c6f8, #4f94c8);
}
.fill-size {
    width: 55px;
    background: linear-gradient(to right, #86c6f8, #68aee4);
    border-right: 1px solid #3e78a8;
}
.fill-full {
    width: 100%;
}
.numbox {
    width: 35px;
    height: 22px;
    margin-left: 6px;
    padding-right: 7px;
    text-align: right;
    line-height: 22px;
    background: #3a3a3a;
    border-radius: 3px;
    font-size: 12px;
}
.pct {
    margin-left: 6px;
    font-size: 11px;
    white-space: nowrap;
}
.pct-big {
    font-size: 12px;
    letter-spacing: .4px;
}

/* brush list */
.panel-brush {
    height: 166px;
}
.brush-body {
    padding: 2px 3px 0 2px;
}
.brush-top {
    display: flex;
    height: 113px;
}
.brush-list {
    width: 176px;
    overflow: hidden;
    background: #595959;
}
.brow {
    height: 20px;
    display: flex;
    align-items: center;
    padding-left: 3px;
    color: #f0f0f0;
    font-size: 11.6px;
    background: #595959;
    border-bottom: 1px solid #7a7a7a;
    position: relative;
}
.brow-on {
    background: #5098cf;
    color: #fff;
}
.bsw {
    width: 14px;
    height: 14px;
    flex: none;
    background: #2f2f2f;
    border: 1px solid #111;
}
.bsw-red {
    background: #ff3838;
    border-color: #922;
}
.bsw-green {
    background: #1db70f;
}
.bnum {
    width: 32px;
    margin-left: 5px;
    flex: none;
}
.brow-on .bnum {
    font-size: 13px;
}
.bgear {
    position: absolute;
    right: 3px;
    top: 3px;
    width: 14px;
    height: 14px;
}
.vscroll {
    width: 18px;
    flex: none;
    display: flex;
    flex-direction: column;
    align-items: center;
}
.vs-brush {
    margin-left: 1px;
}
.vs-brush .arr-up {
    margin: 2px 0 3px;
}
.arr {
    width: 0;
    height: 0;
    flex: none;
    border-style: solid;
    border-color: transparent;
}
.arr-up {
    margin: 3px 0 3px;
    border-width: 0 4px 7px;
    border-bottom-color: #8a8a8a;
}
.arr-down {
    margin: 3px 0 3px;
    border-width: 7px 4px 0;
    border-top-color: #8a8a8a;
}
.arr-left {
    margin: 0 2px;
    border-width: 4px 7px 4px 0;
    border-right-color: #8a8a8a;
}
.arr-right {
    margin: 0 2px;
    border-width: 4px 0 4px 7px;
    border-left-color: #8a8a8a;
}
.vtrack {
    flex: 1;
    width: 100%;
    border-radius: 7px;
    background: linear-gradient(to right, #232323, #3c3c3c 50%, #232323);
}
.vthumb {
    width: 100%;
    height: 27px;
    border-radius: 7px;
    background: #6f6f6f;
}
.brush-bar {
    height: 29px;
    display: flex;
    align-items: center;
    gap: 4px;
    padding-left: 4px;
    margin-top: 0;
    background: #222;
    border: 1px solid #3a3a3a;
    border-width: 1px 0 1px 0;
    width: 195px;
}
.sep-bb {
    margin-left: 1px;
}
.mini-scroll {
    width: 8px;
    height: 22px;
    margin-left: 6px;
    background: #4a4a4a;
    border-radius: 3px;
}
.mini-s {
    font-family: "Open Sans", sans-serif;
    font-size: 10px;
    font-weight: 700;
    text-anchor: middle;
    fill: #ddd;
}

/* center canvas */
.center {
    width: 814px;
    flex: none;
    margin: 0 5px;
    display: flex;
    flex-direction: column;
}
.tabs {
    height: 21px;
    flex: none;
    padding-top: 1px;
    background: #232323;
}
.tab {
    width: 408px;
    height: 19px;
    padding-top: 1px;
    text-align: center;
    line-height: 19px;
    color: #a8a8a8;
    background: linear-gradient(to bottom, #4a4a4a, #333);
}
.canvas {
    height: 627px;
    flex: none;
    display: flex;
    background: #474543;
}
.viewport {
    flex: 1;
    padding-top: 3px;
    overflow: hidden;
}
.page {
    width: 466px;
    height: 622px;
    margin: 0 auto;
    background: #fff;
}
.vs-canvas {
    width: 19px;
    margin-right: 1px;
}
.vs-canvas .arr-up {
    margin: 4px 0 0;
}
.vs-canvas .vtrack {
    background: linear-gradient(to right, #2a2a2a, #3e3e3e 50%, #2a2a2a);
}
.vs-canvas .vthumb {
    height: 152px;
    margin-top: 226px;
}
.hscroll {
    height: 21px;
    flex: none;
    margin-right: 1px;
    display: flex;
    align-items: flex-end;
    background: #474543;
}
.hscroll .arr {
    margin-bottom: 5px;
}
.htrack {
    flex: 1;
    height: 19px;
    border-radius: 8px;
    background: linear-gradient(to bottom, #2a2a2a, #3e3e3e 50%, #2a2a2a);
}
.hthumb {
    width: 221px;
    height: 19px;
    margin-left: 286px;
    border-radius: 5px;
    background: #6f6f6f;
}

/* navigator */
.nav-bar {
    height: 30px;
    display: flex;
    align-items: center;
    gap: 4px;
    padding: 1px 0 0 4px;
    background: #232323;
}
.nav-bar .vsep {
    margin: 0 1px;
}
.nav-view {
    height: 71px;
    padding: 1px 1px 0 0;
    display: flex;
    justify-content: center;
    background: #474543;
}
.nav-frame {
    width: 88px;
    height: 69px;
    border: 2px solid #f00;
}
.nav-inner {
    height: 100%;
    border: 1px solid #8a8a8a;
    border-bottom-width: 0;
    display: flex;
    justify-content: center;
}
.nav-page {
    width: 52px;
    background: #fff;
}

/* layer */
.panel-layer {
    height: 306px;
}
.layer-body {
    padding-top: 7px;
}
.lrow {
    display: flex;
    align-items: center;
    padding-left: 6px;
}
.llabel {
    width: 60px;
    color: #c4c8cc;
    font-size: 10.6px;
}
.lrow-op .llabel {
    margin-bottom: 1px;
}
.lrow-op .pct {
    margin-left: 7px;
}
.lrow-blend {
    margin-top: 5px;
}
.blend-select {
    width: 169px;
    height: 22px;
    margin-left: 3px;
}
.lrow-checks {
    margin-top: 8px;
    padding-left: 9px;
    height: 14px;
}
.ck-label {
    margin-left: 4px;
}
.w-alpha {
    width: 78px;
}
.w-clip {
    width: 57px;
}
.layer-mid {
    display: flex;
    height: 172px;
    margin-top: 8px;
    padding-left: 3px;
}
.layer-list {
    width: 219px;
    background: #474543;
}
.layer-row {
    height: 39px;
    display: flex;
    border-bottom: 1px solid #1c1c1c;
}
.eye {
    width: 19px;
    background: #595959;
    display: flex;
    align-items: center;
    justify-content: center;
    flex: none;
}
.eye i {
    width: 9px;
    height: 9px;
    border-radius: 50%;
    background: #e4e4e4;
    box-shadow: 0 0 2px #fff;
}
.layer-info {
    flex: 1;
    display: flex;
    align-items: center;
    background: #5098cf;
    padding-left: 19px;
}
.layer-thumb {
    width: 27px;
    height: 36px;
    border: 1px solid #888;
    background: repeating-conic-gradient(#dcdcdc 0 25%, #fff 0 50%) 0 0 / 10px 10px;
}
.layer-name {
    margin-left: 20px;
    color: #fff;
    font-size: 12.6px;
}
.layer-gear {
    width: 18px;
    height: 18px;
    margin-left: auto;
    margin-right: 2px;
}
.vs-layer {
    margin-left: 2px;
    width: 19px;
}
.vs-layer .arr-up,
.vs-size .arr-up {
    margin: 1px 0 3px;
}
.vs-layer .vthumb {
    height: 148px;
}
.layer-bar {
    height: 30px;
    display: flex;
    align-items: center;
    gap: 4px;
    padding-left: 5px;
    margin-left: 1px;
    border: 1px solid #363636;
    border-width: 1px 0;
}
.layer-bar .vsep {
    margin: 0 1px;
}

/* brush size */
.panel-size {
    height: 234px;
    flex: 1;
}
.size-body {
    height: 213px;
    overflow: hidden;
    display: flex;
    justify-content: space-between;
    background: #474543;
    padding: 1px 2px 0 1px;
}
.size-grid {
    display: grid;
    grid-template-columns: repeat(5, 38px);
    grid-auto-rows: 48px;
    gap: 2px;
    align-content: start;
}
.cell {
    background: #5a5a5a;
    color: #eee;
    font-size: 10px;
    line-height: 10px;
    text-align: center;
}
.spot {
    height: 38px;
    display: flex;
    align-items: center;
    justify-content: center;
}
.spot i {
    border-radius: 50%;
    background: #efefef;
}
.faint {
    opacity: .45;
}
.s1 { width: 1px; height: 1px; }
.s2 { width: 2px; height: 2px; }
.s3 { width: 3px; height: 3px; }
.s4 { width: 5px; height: 5px; }
.s5 { width: 5px; height: 5px; }
.s7 { width: 7px; height: 7px; }
.s10 { width: 10px; height: 10px; }
.s12 { width: 12px; height: 12px; }
.s15 { width: 15px; height: 15px; }
.s20 { width: 20px; height: 20px; }
.s24 { width: 24px; height: 24px; }
.vs-size {
    width: 19px;
}
.vs-size .vthumb {
    height: 161px;
}

/* status */
.statusbar {
    height: 20px;
    flex: none;
    display: flex;
    align-items: center;
    padding-left: 6px;
    font-size: 11.5px;
    color: #c8c8c8;
    background: #232323;
    white-space: nowrap;
}
.statusbar span {
    flex: none;
}
.st1 { width: 96px; }
.st2 { width: 75px; }
.st3 { width: 47px; }
.st4 { width: 35px; }
.st5 { width: 64px; }
```
